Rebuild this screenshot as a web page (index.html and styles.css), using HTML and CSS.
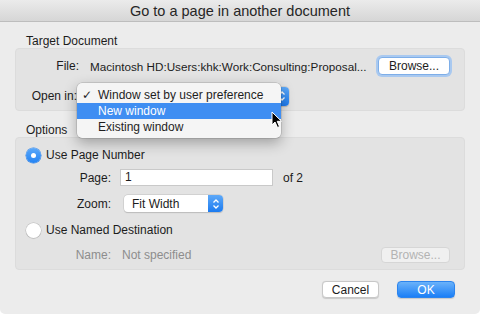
FILE: index.html
```html
<!DOCTYPE html>
<html>
<head>
<meta charset="utf-8">
<link rel="stylesheet" href="styles.css">
</head>
<body>
<div class="window">
  <div class="titlebar">Go to a page in another document</div>
  <div class="content">
    <div class="section-label">Target Document</div>
    <div class="box box-target">
      <div class="row row-file">
        <span class="label label-file">File:</span>
        <span class="path">Macintosh HD:Users:khk:Work:Consulting:Proposal...</span>
        <span class="btn btn-focus">Browse...</span>
      </div>
      <div class="row row-open">
        <span class="label label-open">Open in:</span>
        <span class="popup popup-open"><span class="popup-arrows"><svg width="8" height="12" viewBox="0 0 8 12"><path d="M1.5 4.5 L4 2 L6.5 4.5 M1.5 7.5 L4 10 L6.5 7.5" fill="none" stroke="#fff" stroke-width="1.3"/></svg></span></span>
      </div>
    </div>
    <div class="section-label section-options">Options</div>
    <div class="box box-options">
      <div class="row row-radio">
        <span class="radio radio-on"></span><span class="radio-text">Use Page Number</span>
      </div>
      <div class="row row-page">
        <span class="label label-sub">Page:</span>
        <span class="field">1</span>
        <span class="of">of 2</span>
      </div>
      <div class="row row-zoom">
        <span class="label label-sub">Zoom:</span>
        <span class="popup popup-zoom"><span class="popup-text">Fit Width</span><span class="popup-arrows"><svg width="8" height="12" viewBox="0 0 8 12"><path d="M1.5 4.5 L4 2 L6.5 4.5 M1.5 7.5 L4 10 L6.5 7.5" fill="none" stroke="#fff" stroke-width="1.3"/></svg></span></span>
      </div>
      <div class="row row-radio2">
        <span class="radio"></span><span class="radio-text">Use Named Destination</span>
      </div>
      <div class="row row-name">
        <span class="label label-sub dim">Name:</span>
        <span class="dim name-val">Not specified</span>
        <span class="btn btn-disabled">Browse...</span>
      </div>
    </div>
    <div class="footer">
      <span class="btn btn-cancel">Cancel</span>
      <span class="btn btn-ok">OK</span>
    </div>
  </div>

  <div class="menu">
    <div class="menu-item"><span class="check">✓</span>Window set by user preference</div>
    <div class="menu-item selected">New window</div>
    <div class="menu-item">Existing window</div>
  </div>
  <svg class="cursor" width="12" height="18" viewBox="0 0 12 18"><path d="M1 1 L1 14 L4 11 L6.5 16.5 L8.5 15.6 L6.2 10.3 L10.5 10.3 Z" fill="#000" stroke="#fff" stroke-width="1" stroke-linejoin="round"/></svg>
</div>
</body>
</html>
```
FILE: styles.css
```css
* { box-sizing: border-box; }
html, body { margin: 0; padding: 0; }
body {
  width: 480px;
  height: 314px;
  overflow: hidden;
  background: #ffffff;
  font-family: "Liberation Sans", Arial, sans-serif;
  font-size: 12px;
  color: #1c1c1c;
}
.window {
  position: relative;
  width: 480px;
  height: 314px;
  background: #ececec;
  border-radius: 0 0 5px 5px;
  overflow: hidden;
}
.titlebar {
  height: 22px;
  line-height: 22px;
  text-align: center;
  font-size: 14.5px;
  color: #262626;
  background: linear-gradient(#ebebeb, #d6d6d6);
  border-bottom: 1px solid #bdbdbd;
}
.content {
  padding: 0 15px;
}
.section-label {
  height: 26px;
  padding: 12px 0 0 11px;
  line-height: 14px;
}
.section-options {
  height: 26px;
  padding-top: 12px;
}
.box {
  background: #e3e3e3;
  border: 1px solid #dcdcdc;
  border-radius: 4px;
}
.box-target {
  height: 63px;
  padding-top: 8px;
}
.row {
  display: flex;
  align-items: center;
}
.row-file { height: 18px; }
.label-file { width: 63px; text-align: right; }
.path { margin-left: 11px; flex: 1; font-size: 11.7px; }
.btn {
  display: inline-flex;
  align-items: center;
  justify-content: center;
  height: 17px;
  background: #fff;
  border: 1px solid #c8c8c8;
  border-radius: 4px;
  box-shadow: 0 0.5px 1px rgba(0,0,0,0.15);
}
.btn-focus {
  width: 72px;
  height: 18px;
  margin-right: 14px;
  border: 1px solid #7eaee8;
  box-shadow: 0 0 0 2px #a9c9f0;
}
.row-open { height: 20px; margin-top: 11px; }
.label-open { width: 61px; text-align: right; }
.popup {
  display: flex;
  align-items: center;
  height: 19px;
  background: #fff;
  border-radius: 4px;
  box-shadow: 0 0 0 0.5px #c4c4c4, 0 0.5px 1px rgba(0,0,0,0.2);
  position: relative;
}
.popup-open { width: 205px; margin-left: 7px; justify-content: flex-end; }
.popup-arrows {
  width: 15px;
  height: 100%;
  display: flex;
  align-items: center;
  justify-content: center;
  background: linear-gradient(#5ea9f8, #1c7bf0);
  border-radius: 0 4px 4px 0;
}
.box-options {
  height: 133px;
  padding-top: 9px;
}
.row-radio, .row-radio2 { height: 16px; padding-left: 10px; }
.radio {
  width: 15px;
  height: 15px;
  border-radius: 50%;
  background: #fff;
  box-shadow: 0 0 0 0.5px #b9b9b9, 0 0.5px 1px rgba(0,0,0,0.2);
  position: relative;
}
.radio-on {
  background: linear-gradient(#5aa8fa, #2483f3);
  box-shadow: 0 0 0 0.5px #3a88e8;
}
.radio-on::after {
  content: "";
  position: absolute;
  left: 5px; top: 5px;
  width: 5px; height: 5px;
  border-radius: 50%;
  background: #fff;
}
.radio-text { margin-left: 5px; }
.row-page { height: 17px; margin-top: 6px; }
.label-sub { width: 95px; text-align: right; }
.field {
  margin-left: 9px;
  width: 153px;
  height: 17px;
  background: #fff;
  border: 1px solid #c9c9c9;
  padding-left: 4px;
  line-height: 15px;
}
.of { margin-left: 10px; }
.row-zoom { height: 17px; margin-top: 9px; }
.popup-zoom { margin-left: 13px; width: 99px; height: 17px; justify-content: space-between; }
.popup-text { padding-left: 8px; }
.row-radio2 { margin-top: 10px; }
.row-name { height: 16px; margin-top: 9px; }
.dim { color: #8d8d8d; }
.name-val { margin-left: 11px; flex: 1; }
.btn-disabled {
  width: 69px;
  height: 16px;
  margin-right: 14px;
  color: #b3b3b3;
  background: #f0f0f0;
  border: 1px solid #d6d6d6;
  box-shadow: none;
}
.footer {
  display: flex;
  justify-content: flex-end;
  gap: 18px;
  padding: 11px 10px 0 0;
}
.btn-cancel { width: 57px; height: 17px; }
.btn-ok {
  width: 58px;
  height: 17px;
  color: #fff;
  border: 1px solid #2b84ee;
  background: linear-gradient(#6ab2fa, #1b7ff6);
}
.menu {
  position: absolute;
  left: 77px;
  top: 83px;
  width: 204px;
  height: 55px;
  padding-top: 4px;
  background: #f5f5f5;
  border-radius: 5px;
  box-shadow: 0 0 0 0.5px rgba(0,0,0,0.2), 0 5px 14px rgba(0,0,0,0.3);
  font-size: 12px;
}
.menu-item {
  position: relative;
  height: 16px;
  line-height: 17px;
  padding-left: 21px;
  color: #1e1e1e;
}
.menu-item.selected {
  background: #3f8ef2;
  color: #fff;
}
.check {
  position: absolute;
  left: 5px;
  top: 0;
  font-family: "DejaVu Sans", sans-serif;
  font-size: 12px;
}
.cursor {
  position: absolute;
  left: 271px;
  top: 111px;
}
```
